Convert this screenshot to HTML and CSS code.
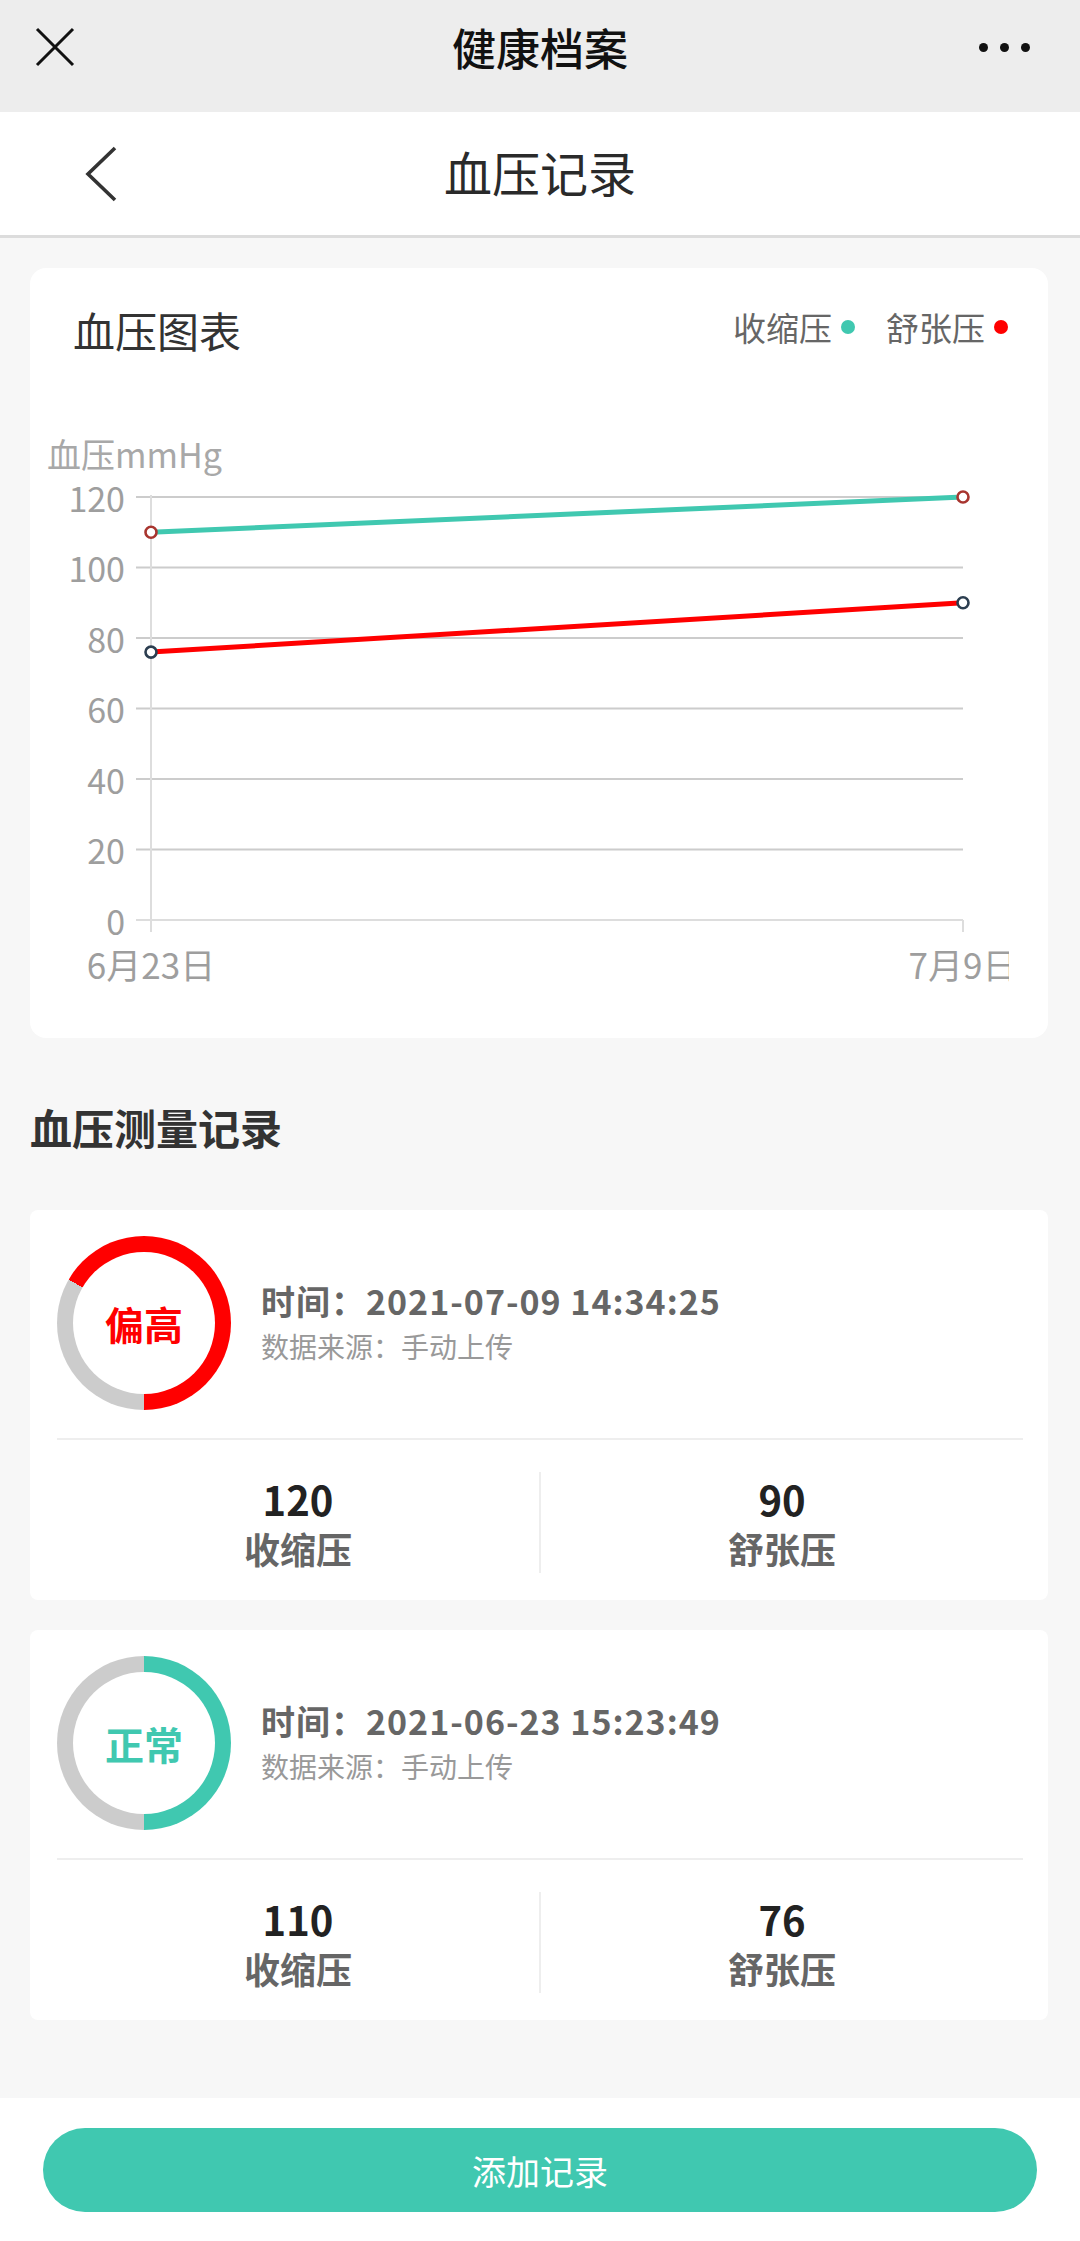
FILE: index.html
```html
<!DOCTYPE html>
<html lang="zh-CN">
<head>
  <meta charset="UTF-8">
  <title>血压记录</title>
  <link rel="stylesheet" href="styles.css">
</head>
<body>
<div class="page">

  <div class="topbar">
    <div class="bar-left">
      <svg class="icon-close" width="40" height="40" viewBox="0 0 40 40">
        <path d="M2 2 L38 38 M38 2 L2 38" stroke="#111" stroke-width="3" fill="none"/>
      </svg>
    </div>
    <div class="topbar-title">健康档案</div>
    <div class="bar-right">
      <span class="dot"></span><span class="dot"></span><span class="dot"></span>
    </div>
  </div>

  <div class="navbar">
    <div class="bar-left nav-left">
      <svg width="36" height="56" viewBox="0 0 36 56">
        <path d="M32 2 L5 28 L32 54" stroke="#333" stroke-width="3.6" fill="none"/>
      </svg>
    </div>
    <div class="navbar-title">血压记录</div>
    <div class="bar-right"></div>
  </div>

  <div class="main">
    <div class="chart-card">
      <div class="chart-head">
        <div class="chart-title">血压图表</div>
        <div class="legend">
          <span class="legend-item">收缩压<i class="legend-dot teal"></i></span>
          <span class="legend-item">舒张压<i class="legend-dot red"></i></span>
        </div>
      </div>
      <svg class="chart" width="979" height="640" viewBox="0 0 979 640">
        <text class="unit" x="17" y="93">血压mmHg</text>

        <g stroke="#ccc" stroke-width="2">
          <line x1="106" y1="137" x2="933" y2="137"/>
          <line x1="106" y1="207.5" x2="933" y2="207.5"/>
          <line x1="106" y1="278" x2="933" y2="278"/>
          <line x1="106" y1="348.5" x2="933" y2="348.5"/>
          <line x1="106" y1="419" x2="933" y2="419"/>
          <line x1="106" y1="489.5" x2="933" y2="489.5"/>
        </g>
        <g stroke="#ddd" stroke-width="2">
          <line x1="106" y1="560" x2="933" y2="560"/>
          <line x1="121" y1="135" x2="121" y2="572"/>
          <line x1="933" y1="560" x2="933" y2="572"/>
        </g>

        <g class="ylabels">
          <text x="95" y="137">120</text>
          <text x="95" y="207.5">100</text>
          <text x="95" y="278">80</text>
          <text x="95" y="348.5">60</text>
          <text x="95" y="419">40</text>
          <text x="95" y="489.5">20</text>
          <text x="95" y="560">0</text>
        </g>
        <g class="xlabels">
          <text x="121" y="603">6月23日</text>
          <text x="933" y="603">7月9日</text>
        </g>

        <line x1="121" y1="172.3" x2="933" y2="137" stroke="#40c8b0" stroke-width="5"/>
        <line x1="121" y1="292.1" x2="933" y2="242.8" stroke="#f00" stroke-width="5"/>

        <g fill="#fff" stroke-width="2.6">
          <circle cx="121" cy="172.3" r="5.5" stroke="#a8352f"/>
          <circle cx="933" cy="137" r="5.5" stroke="#a8352f"/>
          <circle cx="121" cy="292.1" r="5.5" stroke="#2c3e50"/>
          <circle cx="933" cy="242.8" r="5.5" stroke="#2c3e50"/>
        </g>
      </svg>
    </div>

    <h3 class="section-title">血压测量记录</h3>

    <div class="record">
      <div class="record-top">
        <div class="ring ring-high">
          <div class="ring-inner high">偏高</div>
        </div>
        <div class="record-info">
          <div class="record-time">时间：2021-07-09 14:34:25</div>
          <div class="record-source">数据来源：手动上传</div>
        </div>
      </div>
      <div class="record-line"></div>
      <div class="record-stats">
        <div class="stat">
          <div class="stat-num">120</div>
          <div class="stat-label">收缩压</div>
        </div>
        <div class="stat">
          <div class="stat-num">90</div>
          <div class="stat-label">舒张压</div>
        </div>
      </div>
    </div>

    <div class="record">
      <div class="record-top">
        <div class="ring ring-normal">
          <div class="ring-inner normal">正常</div>
        </div>
        <div class="record-info">
          <div class="record-time">时间：2021-06-23 15:23:49</div>
          <div class="record-source">数据来源：手动上传</div>
        </div>
      </div>
      <div class="record-line"></div>
      <div class="record-stats">
        <div class="stat">
          <div class="stat-num">110</div>
          <div class="stat-label">收缩压</div>
        </div>
        <div class="stat">
          <div class="stat-num">76</div>
          <div class="stat-label">舒张压</div>
        </div>
      </div>
    </div>
  </div>

  <div class="footer">
    <button class="add-btn">添加记录</button>
  </div>

</div>
</body>
</html>
```

FILE: styles.css
```css
body {
  margin: 0;
  font-family: "Noto Sans CJK SC", "Noto Sans", sans-serif;
  background: #f7f7f7;
  color: #333;
}
.page {
  display: flex;
  flex-direction: column;
  min-height: 100vh;
}
.topbar {
  height: 94px;
  padding-bottom: 18px;
  background: #ededed;
  display: grid;
  grid-template-columns: 160px 1fr 160px;
  align-items: center;
}
.bar-left {
  display: flex;
  align-items: center;
  padding-left: 35px;
}
.bar-right {
  display: flex;
  justify-content: flex-end;
  align-items: center;
  gap: 12px;
  padding-right: 50px;
}
.icon-close {
  display: block;
}
.dot {
  width: 9px;
  height: 9px;
  border-radius: 50%;
  background: #111;
}
.topbar-title {
  text-align: center;
  font-size: 44px;
  font-weight: 500;
  color: #111;
}
.navbar {
  height: 123px;
  background: #fff;
  border-bottom: 3px solid #dcdcdc;
  display: grid;
  grid-template-columns: 160px 1fr 160px;
  align-items: center;
}
.nav-left {
  padding-left: 83px;
}
.nav-left svg {
  display: block;
}
.navbar-title {
  text-align: center;
  font-size: 48px;
  color: #2a2a2a;
  margin-top: -6px;
}
.main {
  flex: 1;
  padding: 30px 32px 0 30px;
}
.chart-card {
  background: #fff;
  border-radius: 16px;
  padding-bottom: 38px;
}
.chart-head {
  display: flex;
  justify-content: space-between;
  align-items: center;
  padding: 36px 40px 0 43px;
  height: 56px;
}
.chart-title {
  font-size: 42px;
  color: #333;
  margin-top: -6px;
}
.legend {
  display: flex;
  gap: 31px;
  font-size: 33px;
  color: #666;
  margin-top: -10px;
}
.legend-item {
  display: flex;
  align-items: center;
}
.legend-dot {
  width: 14px;
  height: 14px;
  border-radius: 50%;
  margin-left: 9px;
}
.legend-dot.teal {
  background: #40c8b0;
}
.legend-dot.red {
  background: #f00;
}
.chart {
  display: block;
}
.chart text {
  font-family: "Noto Sans CJK SC", sans-serif;
  fill: #9e9e9e;
  font-size: 34px;
  dominant-baseline: central;
}
.chart .unit {
  font-size: 34px;
  fill: #a8a8a8;
}
.chart .xlabels text {
  font-size: 35px;
}
.ylabels text {
  text-anchor: end;
}
.xlabels text {
  text-anchor: middle;
}
.section-title {
  margin: 59px 0 53px;
  font-size: 42px;
  line-height: 60px;
  font-weight: bold;
  color: #333;
}
.record {
  background: #fff;
  border-radius: 8px;
  padding: 26px 25px 27px 27px;
  margin-bottom: 30px;
}
.record-top {
  display: flex;
  align-items: center;
}
.ring {
  width: 174px;
  height: 174px;
  border-radius: 50%;
  display: flex;
  justify-content: center;
  align-items: center;
  flex-shrink: 0;
}
.ring-high {
  background: conic-gradient(#f00 0 180deg, #ccc 180deg 300deg, #f00 300deg);
}
.ring-normal {
  background: conic-gradient(#40c8b0 0 180deg, #ccc 180deg);
}
.ring-inner {
  width: 142px;
  height: 142px;
  border-radius: 50%;
  background: #fff;
  display: flex;
  justify-content: center;
  align-items: center;
  font-size: 39px;
  font-weight: bold;
}
.ring-inner.high {
  color: #f00;
}
.ring-inner.normal {
  color: #40c8b0;
}
.record-info {
  margin-left: 30px;
}
.record-time {
  font-size: 34px;
  line-height: 46px;
  font-weight: bold;
  letter-spacing: 1px;
  color: #666;
}
.record-source {
  font-size: 28px;
  line-height: 44px;
  color: #999;
}
.record-line {
  height: 2px;
  background: #eee;
  margin: 28px 0 32px;
}
.record-stats {
  display: flex;
}
.stat {
  flex: 1;
  text-align: center;
  padding: 2px 0 1px;
}
.stat:first-child {
  border-right: 2px solid #eee;
}
.stat-num {
  font-size: 40px;
  line-height: 50px;
  font-weight: bold;
  color: #222;
}
.stat-label {
  font-size: 36px;
  line-height: 48px;
  font-weight: bold;
  color: #666;
}
.footer {
  background: #fff;
  padding: 30px 43px 29px;
}
.add-btn {
  display: block;
  width: 100%;
  height: 84px;
  border: none;
  border-radius: 42px;
  background: #40c8b0;
  color: #fff;
  font-family: "Noto Sans CJK SC", sans-serif;
  font-size: 34px;
}
```
